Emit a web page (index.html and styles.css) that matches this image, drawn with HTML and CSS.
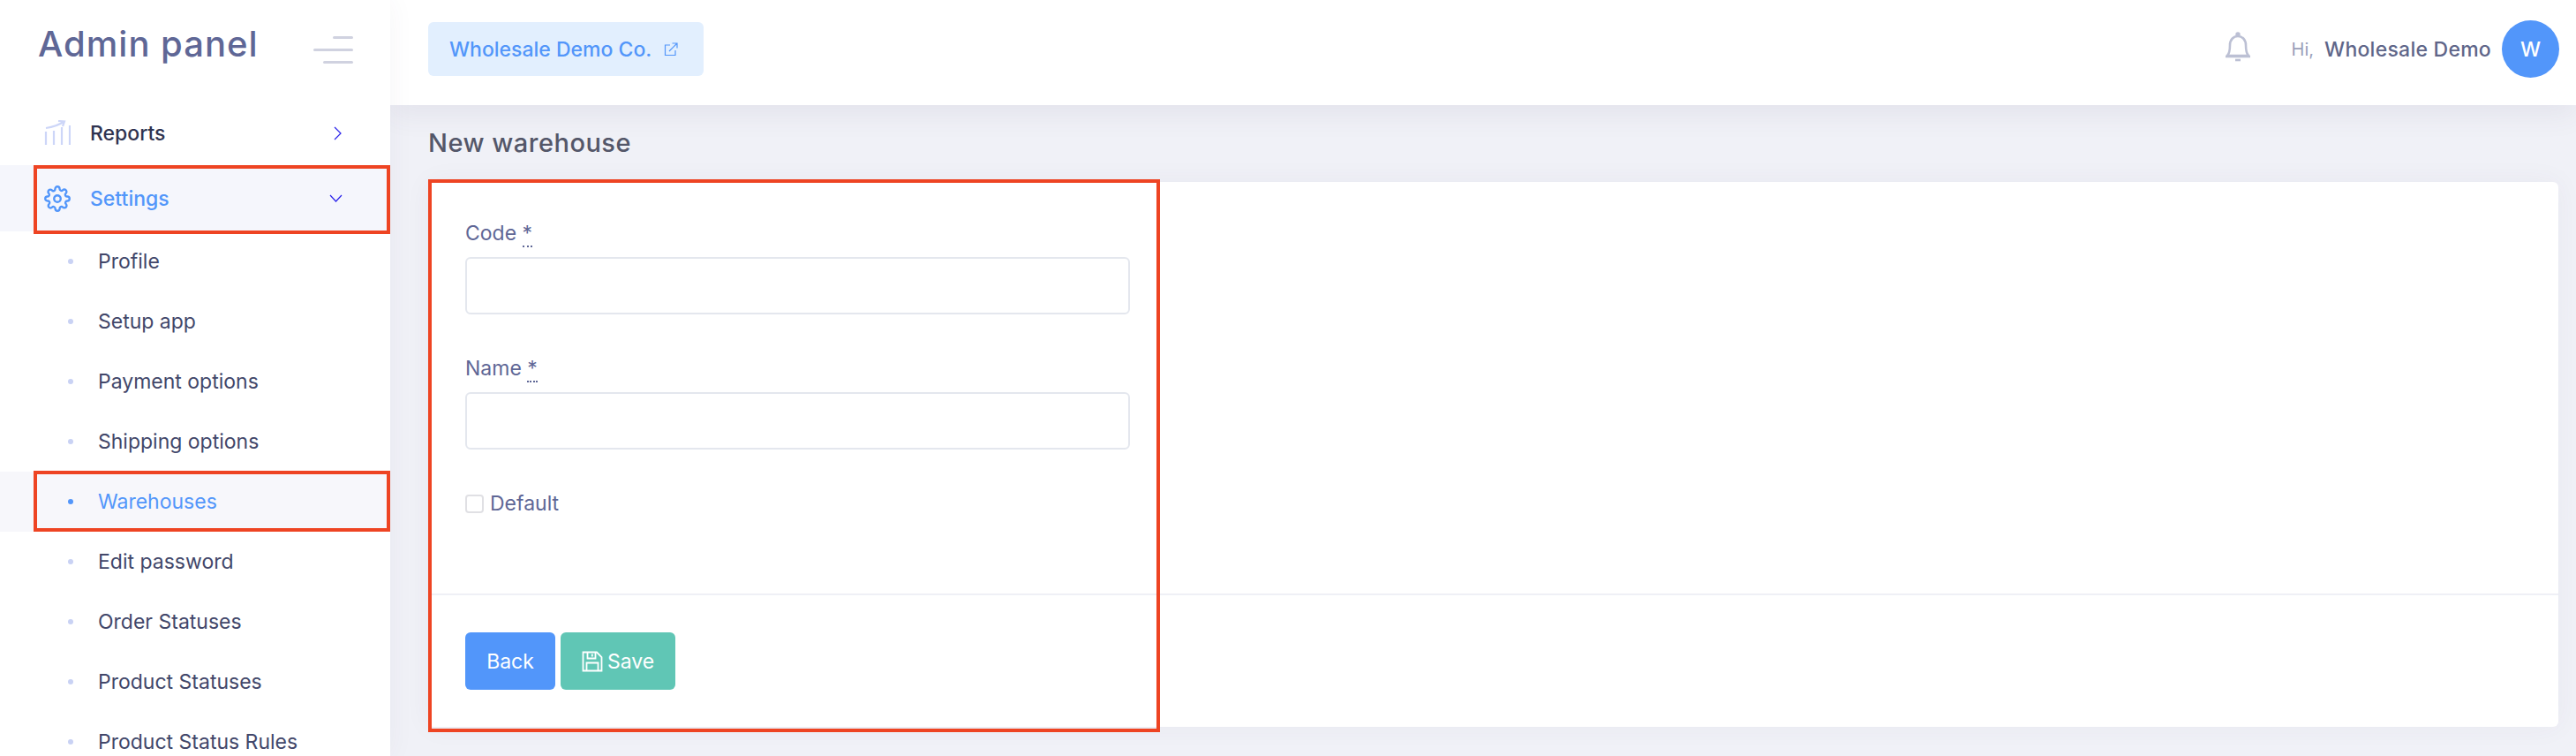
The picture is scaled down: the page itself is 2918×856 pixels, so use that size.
FILE: index.html
```html
<!DOCTYPE html>
<html lang="en">
<head>
    <meta charset="UTF-8">
    <meta name="viewport" content="width=device-width, initial-scale=1.0">
    <title>New warehouse</title>
    <link rel="stylesheet" href="styles.css">
</head>
<body>
    <div class="page">
        <aside class="sidebar">
            <div class="brand">
                <span class="brand-name">Admin panel</span>
                <span class="burger"><i class="b1"></i><i class="b2"></i><i class="b3"></i></span>
            </div>
            <nav class="menu">
                <a class="menu-item">
                    <svg class="menu-icon" viewBox="0 0 30 30" fill="none" stroke="#cdd6f8" stroke-width="2.2">
                        <path d="M2 9C9 8 16 6 22 2M16 1L23 1.5L21 7"/>
                        <path d="M2 13V28M11 12V28M20 8V28M29 6V28"/>
                    </svg>
                    <span class="menu-text">Reports</span>
                    <svg class="arrow arrow-r" viewBox="0 0 9 16" fill="none" stroke="#2a22ea" stroke-width="1.2"><path d="M1 1L8 8L1 15"/></svg>
                </a>
                <a class="menu-item active">
                    <svg class="menu-icon" viewBox="0 0 24 24" fill="none" stroke="#5296fa" stroke-width="1.9" stroke-linejoin="round">
                        <circle cx="12" cy="12" r="3"/>
                        <path d="M19.4 15a1.65 1.65 0 0 0 .33 1.82l.06.06a2 2 0 1 1-2.83 2.83l-.06-.06a1.65 1.65 0 0 0-2.82 1.17V21a2 2 0 1 1-4 0v-.09a1.65 1.65 0 0 0-2.81-1.17l-.06.06a2 2 0 1 1-2.83-2.83l.06-.06A1.65 1.65 0 0 0 3.17 14H3a2 2 0 1 1 0-4h.09a1.65 1.65 0 0 0 1.17-2.81l-.06-.06a2 2 0 1 1 2.83-2.83l.06.06A1.65 1.65 0 0 0 10 3.17V3a2 2 0 1 1 4 0v.09a1.65 1.65 0 0 0 2.81 1.17l.06-.06a2 2 0 1 1 2.83 2.83l-.06.06A1.65 1.65 0 0 0 20.83 10H21a2 2 0 1 1 0 4h-.09a1.65 1.65 0 0 0-1.51 1z"/>
                    </svg>
                    <span class="menu-text">Settings</span>
                    <svg class="arrow arrow-d" viewBox="0 0 15 9" fill="none" stroke="#2a22ea" stroke-width="1.2"><path d="M1 1L7.5 8L14 1"/></svg>
                </a>
                <a class="sub-item"><i class="dot"></i>Profile</a>
                <a class="sub-item"><i class="dot"></i>Setup app</a>
                <a class="sub-item"><i class="dot"></i>Payment options</a>
                <a class="sub-item"><i class="dot"></i>Shipping options</a>
                <a class="sub-item active"><i class="dot"></i>Warehouses</a>
                <a class="sub-item"><i class="dot"></i>Edit password</a>
                <a class="sub-item"><i class="dot"></i>Order Statuses</a>
                <a class="sub-item"><i class="dot"></i>Product Statuses</a>
                <a class="sub-item"><i class="dot"></i>Product Status Rules</a>
            </nav>
        </aside>

        <div class="main">
            <header class="topbar">
                <a class="shop-btn">Wholesale Demo Co.
                    <svg class="ext-icon" viewBox="0 0 16 16" fill="none" stroke="#5296fa" stroke-width="1.2"><path d="M7 3H1.5V14.5H13V9M6 10L14.5 1.5M9.5 1H15V6.5"/></svg>
                </a>
                <div class="user">
                    <svg class="bell" viewBox="0 0 30 34" fill="none" stroke="#bcc0d4" stroke-width="2.6"><path d="M3 27C6 24 6 20 6 15C6 9 10 5 15 5C20 5 24 9 24 15C24 20 24 24 27 27Z" stroke-linejoin="round"/><path d="M1 28H29"/><circle cx="15" cy="3" r="1.4"/><path d="M12 32H18"/></svg>
                    <span class="hi">Hi,</span>
                    <span class="user-name">Wholesale Demo</span>
                    <span class="avatar">W</span>
                </div>
            </header>

            <div class="content">
                <h1 class="page-title">New warehouse</h1>
                <form class="card">
                    <div class="card-body">
                        <div class="form-group">
                            <label class="field-label">Code <abbr class="req">*</abbr></label>
                            <input class="field" type="text">
                        </div>
                        <div class="form-group">
                            <label class="field-label">Name <abbr class="req">*</abbr></label>
                            <input class="field" type="text">
                        </div>
                        <label class="check"><span class="box"></span>Default</label>
                    </div>
                    <div class="card-footer">
                        <a class="btn btn-back">Back</a>
                        <a class="btn btn-save">
                            <svg class="save-icon" viewBox="0 0 24 24" fill="none" stroke="#fff" stroke-width="1.8"><path d="M1.5 1.5H17L22.5 7V22.5H1.5Z"/><path d="M6.5 1.5V8.5H15.5V1.5M11.8 3.5V6.5"/><path d="M5.5 22.5V13.5H18.5V22.5"/></svg>
                            Save
                        </a>
                    </div>
                </form>
            </div>
        </div>
    </div>

    <!-- red annotation boxes -->
    <div class="mark mark-settings"></div>
    <div class="mark mark-warehouses"></div>
    <div class="mark mark-form"></div>
</body>
</html>
```

FILE: styles.css
```css
* {
    box-sizing: border-box;
}

html, body {
    margin: 0;
    height: 856px;
    overflow: hidden;
}

body {
    font-family: "Inter", "Liberation Sans", sans-serif;
    font-size: 23px;
    color: #3f4462;
    background-color: #f0f1f7;
}

.page {
    display: flex;
    height: 856px;
}

/* sidebar */
.sidebar {
    position: relative;
    z-index: 2;
    width: 442px;
    flex: none;
    background-color: white;
    box-shadow: 0 0 28px rgba(82, 63, 105, 0.05);
}

.brand {
    display: flex;
    justify-content: space-between;
    align-items: center;
    height: 98px;
    padding: 0 42px 0 43px;
}

.brand-name {
    font-size: 40px;
    font-weight: 500;
    color: #5f6796;
    letter-spacing: 1px;
}

.burger {
    display: flex;
    flex-direction: column;
    align-items: flex-end;
    gap: 11px;
    width: 45px;
    margin-top: 15px;
}

.burger i {
    display: block;
    height: 3px;
    background-color: #d0d2e0;
    border-radius: 2px;
}

.burger .b1 { width: 23px; }
.burger .b2 { width: 45px; }
.burger .b3 { width: 34px; }

.menu {
    padding-top: 19px;
}

.menu-item {
    display: flex;
    align-items: center;
    height: 68px;
    padding-left: 50px;
    font-weight: 500;
    color: #2f3350;
}

.menu-item + .menu-item {
    margin-top: 2px;
    height: 75px;
}

.menu-item.active {
    background-color: #f5f6fc;
    color: #5296fa;
}

.menu-icon {
    width: 30px;
    height: 30px;
    flex: none;
}

.menu-text {
    margin-left: 22px;
    flex: 1;
}

.arrow-r {
    width: 9px;
    height: 16px;
    margin-right: 55px;
}

.arrow-d {
    width: 15px;
    height: 9px;
    margin-right: 54px;
}

.sub-item {
    display: flex;
    align-items: center;
    height: 68px;
    padding-left: 77px;
    color: #42476a;
}

.sub-item .dot {
    width: 6px;
    height: 6px;
    border-radius: 50%;
    background-color: #c9d2f4;
    margin-right: 28px;
}

.sub-item.active {
    background-color: #f7f7fb;
    color: #5296fa;
}

.sub-item.active .dot {
    background-color: #5296fa;
}

/* top bar */
.main {
    flex: 1;
    display: flex;
    flex-direction: column;
}

.topbar {
    position: relative;
    z-index: 1;
    display: flex;
    justify-content: space-between;
    align-items: center;
    height: 119px;
    flex: none;
    padding: 0 19px 8px 43px;
    background-color: white;
    box-shadow: 0 10px 30px rgba(82, 63, 105, 0.08);
}

.shop-btn {
    display: flex;
    align-items: center;
    height: 61px;
    width: 312px;
    padding-left: 24px;
    border-radius: 6px;
    background-color: #e2effe;
    color: #5296fa;
    font-weight: 500;
}

.ext-icon {
    width: 16px;
    height: 16px;
    margin-left: 14px;
}

.user {
    display: flex;
    align-items: center;
}

.bell {
    width: 30px;
    height: 34px;
    margin: 0 46px 5px 0;
}

.hi {
    font-size: 20px;
    color: #9a9fba;
    margin-right: 12px;
}

.user-name {
    font-weight: 500;
    letter-spacing: 0.25px;
    color: #5f6689;
    margin-right: 12px;
}

.avatar {
    display: flex;
    align-items: center;
    justify-content: center;
    width: 65px;
    height: 65px;
    border-radius: 50%;
    background-color: #5296fa;
    color: white;
    font-weight: 500;
}

/* content */
.content {
    flex: 1;
    padding: 0 20px 0 43px;
}

.page-title {
    display: flex;
    align-items: center;
    height: 85px;
    margin: 0 0 2px;
    font-size: 29px;
    font-weight: 500;
    letter-spacing: 0.5px;
    color: #545769;
}

.card {
    height: 617px;
    background-color: white;
    border-radius: 6px;
    box-shadow: 0 0 30px rgba(82, 63, 105, 0.05);
}

.card-body {
    height: 466px;
    width: 795px;
    padding: 43px 0 0 42px;
}

.form-group {
    margin-bottom: 46px;
}

.field-label {
    display: block;
    margin-bottom: 12px;
    line-height: 30px;
    color: #5f6796;
}

.field {
    display: block;
    width: 100%;
    height: 65px;
    border: 2px solid #e4e7ee;
    border-radius: 6px;
    background-color: white;
    outline: none;
}

.req {
    border-bottom: 2px dotted #5f6796;
    text-decoration: none;
}

.check {
    display: flex;
    align-items: center;
    line-height: 30px;
    color: #5f6796;
}

.box {
    width: 21px;
    height: 21px;
    margin-right: 7px;
    border: 2px solid #e0e0e4;
    border-radius: 4px;
}

.card-footer {
    display: flex;
    gap: 6px;
    padding: 42px 42px;
    border-top: 2px solid #eff0f6;
}

.btn {
    display: flex;
    align-items: center;
    justify-content: center;
    height: 65px;
    border-radius: 6px;
    color: white;
}

.btn-back {
    width: 102px;
    background-color: #5296fa;
}

.btn-save {
    width: 130px;
    background-color: #60c6b5;
}

.save-icon {
    width: 24px;
    height: 24px;
    margin-right: 5px;
}

/* annotation boxes drawn over the screenshot */
.mark {
    position: absolute;
    z-index: 3;
    border: 4px solid #ee4423;
}

.mark-settings {
    left: 38px;
    top: 187px;
    width: 404px;
    height: 78px;
}

.mark-warehouses {
    left: 38px;
    top: 533px;
    width: 404px;
    height: 69px;
}

.mark-form {
    left: 485px;
    top: 203px;
    width: 829px;
    height: 626px;
}
```
